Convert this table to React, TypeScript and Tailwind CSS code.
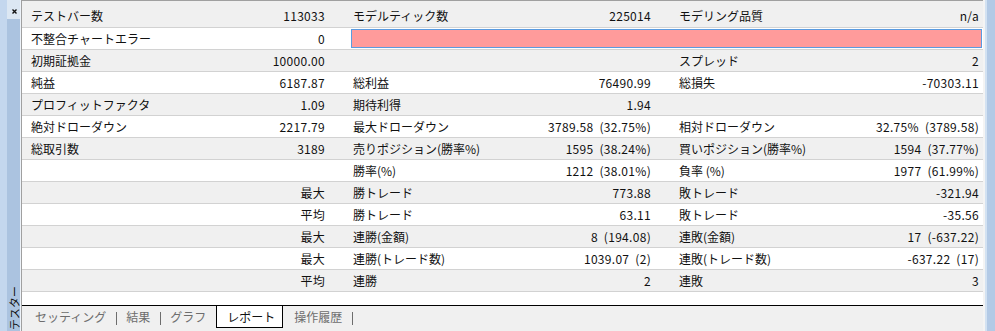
import React from "react";

type Row = [string, string, string, string, string, string];

const ROWS: Row[] = [
  ["テストバー数", "113033", "モデルティック数", "225014", "モデリング品質", "n/a"],
  ["不整合チャートエラー", "0", "", "", "", ""],
  ["初期証拠金", "10000.00", "", "", "スプレッド", "2"],
  ["純益", "6187.87", "総利益", "76490.99", "総損失", "-70303.11"],
  ["プロフィットファクタ", "1.09", "期待利得", "1.94", "", ""],
  ["絶対ドローダウン", "2217.79", "最大ドローダウン", "3789.58 (32.75%)", "相対ドローダウン", "32.75% (3789.58)"],
  ["総取引数", "3189", "売りポジション(勝率%)", "1595 (38.24%)", "買いポジション(勝率%)", "1594 (37.77%)"],
  ["", "", "勝率(%)", "1212 (38.01%)", "負率 (%)", "1977 (61.99%)"],
  ["", "最大", "勝トレード", "773.88", "敗トレード", "-321.94"],
  ["", "平均", "勝トレード", "63.11", "敗トレード", "-35.56"],
  ["", "最大", "連勝(金額)", "8 (194.08)", "連敗(金額)", "17 (-637.22)"],
  ["", "最大", "連勝(トレード数)", "1039.07 (2)", "連敗(トレード数)", "-637.22 (17)"],
  ["", "平均", "連勝", "2", "連敗", "3"],
];

const TABS = ["セッティング", "結果", "グラフ", "レポート", "操作履歴"];

export default function App() {
  return (
    <div className="flex h-[331px] w-[995px] overflow-hidden bg-white font-['Noto_Sans_CJK_JP','Noto_Sans',sans-serif] text-[12px] text-[#111]">
      <SideStrip />
      <div className="flex w-[962px] flex-col border-l border-t border-[#a0a0a0]">
        {ROWS.map((row, i) => (
          <ReportRow key={i} row={row} index={i} />
        ))}
        <div className="flex-1 bg-white" />
        <TabBar />
      </div>
      <div className="flex w-[12px]">
        <div className="w-[2px] bg-[#f4f4f4]" />
        <div className="w-[2px] bg-[#d3e2f2]" />
        <div className="flex-1 bg-[#b3cae6]" />
      </div>
    </div>
  );
}

function SideStrip() {
  return (
    <div className="flex h-full w-[21px]">
      <div className="w-[7px] bg-[#c4d7ee]" />
      <div className="flex w-[13px] flex-col bg-[#abc3e0]">
        <div className="flex h-[19px] items-start bg-[#dce7f3] pl-[5px] pt-[9px]">
          <svg width="5" height="5" viewBox="0 0 5 5">
            <path d="M0.5 0.5 L4.5 4.5 M4.5 0.5 L0.5 4.5" stroke="#111" strokeWidth="1.4" />
          </svg>
        </div>
        <div className="flex-1" />
        <div className="flex justify-center pb-[1px]">
          <span className="rotate-180 text-[11px] leading-[12px] text-[#111] [text-orientation:sideways] [writing-mode:vertical-rl]">
            テスター
          </span>
        </div>
      </div>
      <div className="w-px bg-[#eef3f9]" />
    </div>
  );
}

// values get a bit of extra spacing: the original UI font sets parens and spaces wider
const VALUE = "whitespace-nowrap text-right tracking-[0.3px] [word-spacing:3px]";

function ReportRow({ row, index }: { row: Row; index: number }) {
  const gray = index % 2 === 0;
  const first = index === 0;
  return (
    <div
      className={
        "grid grid-cols-[158px_167px_153px_173px_157px_1fr] items-center border-b border-[#d2d2d2] " +
        (gray ? "bg-[#f0f0f0] " : "bg-white ") +
        (first ? "h-[27px] pt-[4px]" : "h-[22px]")
      }
    >
      <div className="whitespace-nowrap pl-[9px]">{row[0]}</div>
      <div className={VALUE + " pr-[22px]"}>{row[1]}</div>
      {index === 1 ? (
        <div className="col-span-4 ml-[4px] mr-[1px] h-[19px] border border-[#5a9be0] bg-[#ff9b9b]" />
      ) : (
        <>
          <div className="whitespace-nowrap pl-[6px]">{row[2]}</div>
          <div className={VALUE + " pr-[22px]"}>{row[3]}</div>
          <div className="whitespace-nowrap pl-[6px]">{row[4]}</div>
          <div className={VALUE + " pr-[4px]"}>{row[5]}</div>
        </>
      )}
    </div>
  );
}

function TabBar() {
  return (
    <div className="flex h-[26px] items-start border-t border-black bg-[#f0f0f0] pl-[13px]">
      <span className="flex h-[22px] items-center text-[#6d6d6d]">{TABS[0]}</span>
      <Sep />
      <span className="flex h-[22px] items-center text-[#6d6d6d]">{TABS[1]}</span>
      <Sep />
      <span className="flex h-[22px] items-center text-[#6d6d6d]">{TABS[2]}</span>
      <span className="ml-[10px] flex h-[22px] items-center border-x border-b border-black bg-white pl-[10px] pr-[7px] text-[#111]">
        {TABS[3]}
      </span>
      <span className="ml-[11px] flex h-[22px] items-center text-[#6d6d6d]">{TABS[4]}</span>
      <Sep />
    </div>
  );
}

function Sep() {
  return <div className="ml-[10px] mr-[9px] mt-[6px] h-[13px] w-px bg-[#6d6d6d]" />;
}
